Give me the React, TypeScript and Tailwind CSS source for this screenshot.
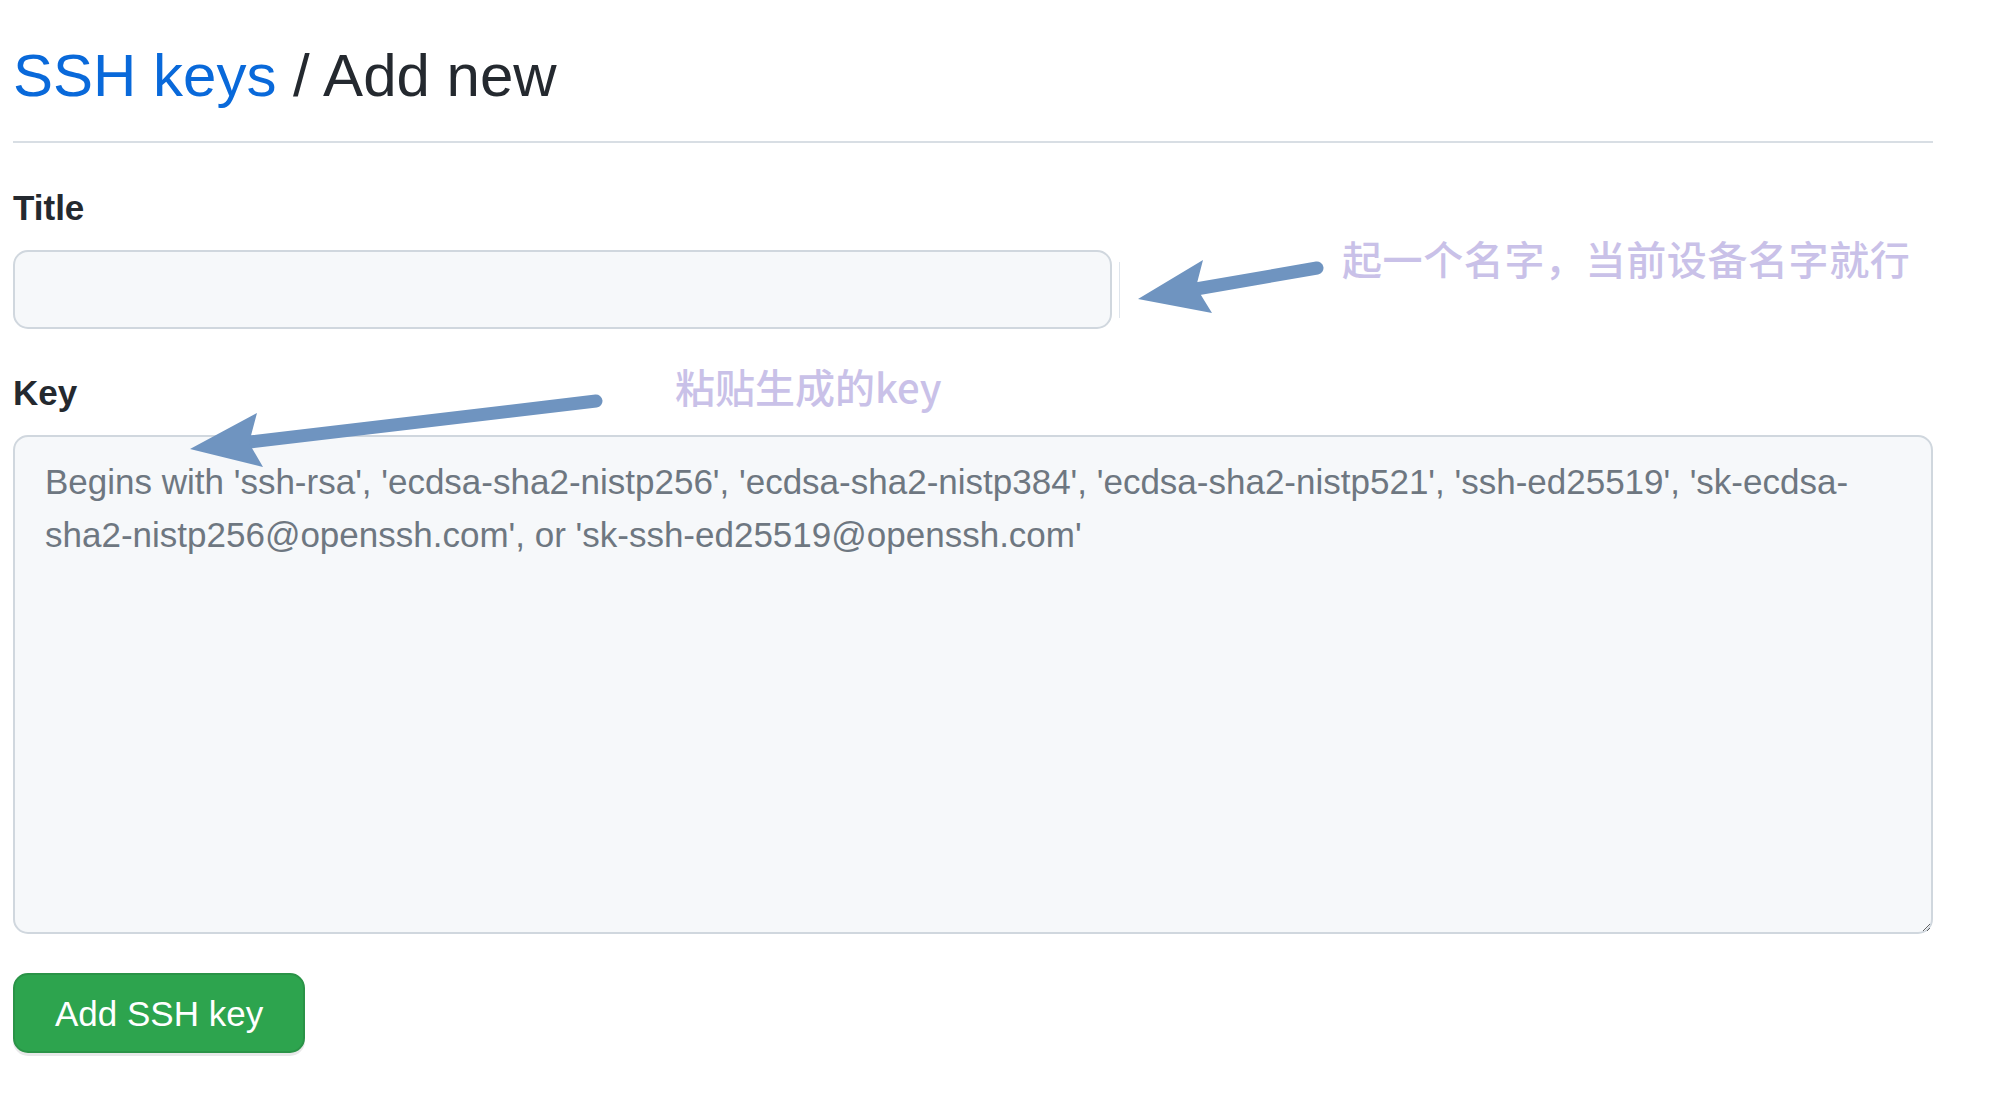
import React from 'react';

const ARROW = '#6f94c0';

const App: React.FC = () => {
  return (
    <div className="relative min-h-[1107px] w-[2002px] overflow-hidden bg-white font-['Liberation_Sans',Arial,sans-serif] text-[#24292f]">
      <div className="ml-[13px] w-[1920px] pt-[38px]">
        {/* Subhead */}
        <div className="border-b-2 border-[#d8dee4] pb-[28px]">
          <h1 className="text-[60px] font-normal leading-[75px]">
            <a className="text-[#0969da]">SSH keys</a> / Add new
          </h1>
        </div>

        {/* Title field */}
        <label className="mt-[39px] block text-[35px] font-bold leading-[52px]">Title</label>
        <div className="mt-[16px] flex items-center">
          <input
            type="text"
            className="h-[79px] w-[1099px] rounded-[15px] border-2 border-[#d0d7de] bg-[#f6f8fa] px-[30px] text-[35px] outline-none"
          />
          <div className="ml-[7px] h-[56px] w-px bg-[#dfe5ec]" />
        </div>

        {/* Key field */}
        <label className="mt-[38px] block text-[35px] font-bold leading-[52px]">Key</label>
        <textarea
          className="mt-[16px] block h-[499px] w-[1920px] resize-y rounded-[15px] border-2 border-[#d0d7de] bg-[#f6f8fa] pl-[30px] pr-[31px] pt-[18px] font-['Liberation_Sans',Arial,sans-serif] text-[35px] leading-[53px] text-[#24292f] outline-none placeholder:text-[#6e7781]"
          placeholder="Begins with 'ssh-rsa', 'ecdsa-sha2-nistp256', 'ecdsa-sha2-nistp384', 'ecdsa-sha2-nistp521', 'ssh-ed25519', 'sk-ecdsa-sha2-nistp256@openssh.com', or 'sk-ssh-ed25519@openssh.com'"
        />

        <button className="mt-[39px] h-[80px] rounded-[15px] border-2 border-[#2a9347] bg-[#2da44e] px-[40px] text-[35px] leading-none text-white shadow-[0_3px_0_rgba(27,31,36,0.1)]">
          Add SSH key
        </button>
      </div>

      {/* Annotations */}
      <svg className="pointer-events-none absolute left-0 top-0" width="2002" height="1107">
        <line x1="1317" y1="268" x2="1196" y2="289" stroke={ARROW} strokeWidth="13" strokeLinecap="round" />
        <polygon points="1138,299 1203,260 1196,287 1212,313" fill={ARROW} />
        <line x1="596" y1="401" x2="250" y2="442" stroke={ARROW} strokeWidth="13" strokeLinecap="round" />
        <polygon points="190,449 257,413 249,443 263,467" fill={ARROW} />
      </svg>
      <div className="pointer-events-none absolute left-[1342px] top-[238px] font-['Noto_Sans_CJK_SC',sans-serif] text-[40px] font-medium leading-[40px] tracking-[0.6px] text-[#c9c1e8]">
        起一个名字，当前设备名字就行
      </div>
      <div className="pointer-events-none absolute left-[675px] top-[366px] font-['Noto_Sans_CJK_SC',sans-serif] text-[40px] font-medium leading-[40px] text-[#c9c1e8]">
        粘贴生成的key
      </div>
    </div>
  );
};

export default App;
